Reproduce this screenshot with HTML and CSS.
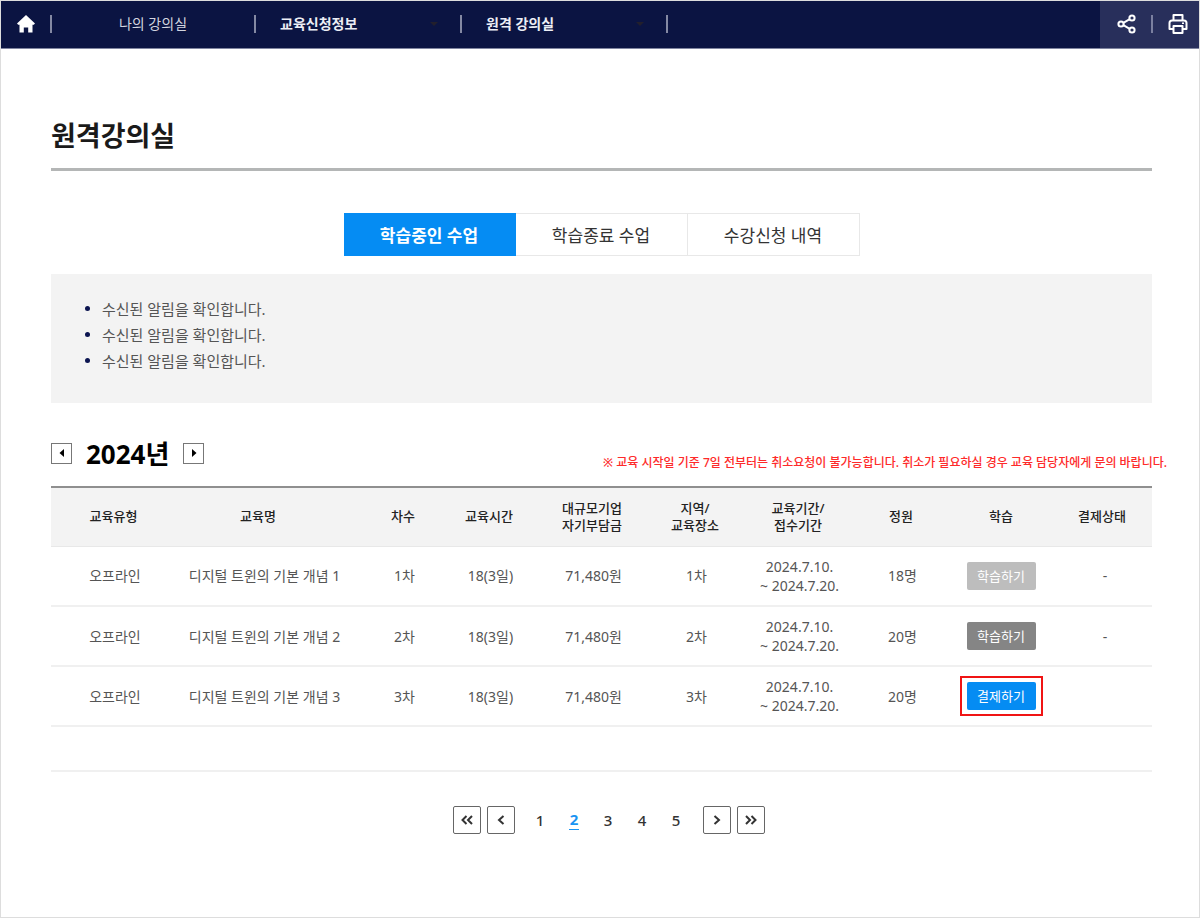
FILE: index.html
```html
<!DOCTYPE html>
<html lang="ko">
<head>
<meta charset="utf-8">
<meta name="viewport" content="width=device-width, initial-scale=1">
<title>원격강의실</title>
<link rel="stylesheet" href="styles.css">
</head>
<body>
<div class="page">
  <header class="topbar">
    <nav class="crumbs" aria-label="현재 위치">
      <a class="home" href="#" aria-label="홈">
        <svg width="20" height="20" viewBox="0 0 20 20"><path fill="#fff" d="M10 1 L1 9.6 L2.2 10.8 H3.5 V18.5 H7.8 V13.5 H12.2 V18.5 H16.5 V10.8 H17.8 L19 9.6 Z"/></svg>
      </a>
      <a class="crumb crumb-root" href="#">나의 강의실</a>
      <button class="crumb crumb-menu" type="button">교육신청정보<span class="caret"></span></button>
      <button class="crumb crumb-menu" type="button">원격 강의실<span class="caret"></span></button>
      <span class="crumb-end"></span>
    </nav>
    <div class="tools">
      <button class="tool" type="button" aria-label="공유">
        <svg width="20" height="22" viewBox="0 0 20 22" fill="none" stroke="#fff" stroke-width="2"><circle cx="4" cy="11" r="2.6"/><circle cx="15" cy="5" r="2.6"/><circle cx="15" cy="17" r="2.6"/><path d="M6.4 9.8 L12.7 6.2 M6.4 12.2 L12.7 15.8"/></svg>
      </button>
      <span class="tool-line"></span>
      <button class="tool" type="button" aria-label="인쇄">
        <svg width="22" height="22" viewBox="0 0 22 22" fill="none" stroke="#fff" stroke-width="2" stroke-linejoin="round"><path d="M6.500 7.500 V2 H15.500 V7.500"/><path d="M6 16 H2.500 V10 Q2.500 7.500 5 7.500 H17 Q19.500 7.500 19.500 10 V16 H16"/><path d="M6.500 13 H15.500 V20 H6.500 Z"/><path stroke-width="1.500" d="M15 10.300 H17"/></svg>
      </button>
    </div>
  </header>

  <main class="content">
    <h1 class="title">원격강의실</h1>

    <div class="tabs" role="tablist">
      <button class="tab tab-on" type="button" role="tab" aria-selected="true">학습중인 수업</button>
      <button class="tab" type="button" role="tab" aria-selected="false">학습종료 수업</button>
      <button class="tab" type="button" role="tab" aria-selected="false">수강신청 내역</button>
    </div>

    <ul class="notices">
      <li>수신된 알림을 확인합니다.</li>
      <li>수신된 알림을 확인합니다.</li>
      <li>수신된 알림을 확인합니다.</li>
    </ul>

    <div class="yearbar">
      <div class="year">
        <button class="year-btn" type="button" aria-label="이전 연도"><svg width="6" height="8" viewBox="0 0 6 8"><path d="M5 0 V8 L0.500 4 Z"/></svg></button>
        <h2 class="year-text">2024년</h2>
        <button class="year-btn" type="button" aria-label="다음 연도"><svg width="6" height="8" viewBox="0 0 6 8"><path d="M1 0 V8 L5.500 4 Z"/></svg></button>
      </div>
      <p class="warning">※ 교육 시작일 기준 7일 전부터는 취소요청이 불가능합니다. 취소가 필요하실 경우 교육 담당자에게 문의 바랍니다.</p>
    </div>

    <table class="courses">
      <colgroup>
        <col class="c-type"><col class="c-name"><col class="c-round"><col class="c-time"><col class="c-fee"><col class="c-place"><col class="c-date"><col class="c-seats"><col class="c-study"><col class="c-pay">
      </colgroup>
      <thead>
        <tr>
          <th class="type">교육유형</th><th>교육명</th><th>차수</th><th>교육시간</th><th>대규모기업<br>자기부담금</th><th>지역/<br>교육장소</th><th>교육기간/<br>접수기간</th><th>정원</th><th>학습</th><th>결제상태</th>
        </tr>
      </thead>
      <tbody>
        <tr>
          <td class="type">오프라인</td><td class="name">디지털 트윈의 기본 개념 1</td><td>1차</td><td>18(3일)</td><td>71,480원</td><td>1차</td><td>2024.7.10.<br>~ 2024.7.20.</td><td>18명</td><td class="study"><button class="btn btn-light" type="button">학습하기</button></td><td>-</td>
        </tr>
        <tr>
          <td class="type">오프라인</td><td class="name">디지털 트윈의 기본 개념 2</td><td>2차</td><td>18(3일)</td><td>71,480원</td><td>2차</td><td>2024.7.10.<br>~ 2024.7.20.</td><td>20명</td><td class="study"><button class="btn btn-dark" type="button">학습하기</button></td><td>-</td>
        </tr>
        <tr>
          <td class="type">오프라인</td><td class="name">디지털 트윈의 기본 개념 3</td><td>3차</td><td>18(3일)</td><td>71,480원</td><td>3차</td><td>2024.7.10.<br>~ 2024.7.20.</td><td>20명</td><td class="study"><span class="marked"><button class="btn btn-blue" type="button">결제하기</button></span></td><td></td>
        </tr>
        <tr class="blank"><td colspan="10"></td></tr>
      </tbody>
    </table>

    <nav class="pager" aria-label="페이지">
      <a class="page-btn" href="#" aria-label="처음"><svg width="14" height="12" viewBox="0 0 14 12"><path d="M6.500 2 L2.500 6 L6.500 10 M12 2 L8 6 L12 10"/></svg></a>
      <a class="page-btn" href="#" aria-label="이전"><svg width="14" height="12" viewBox="0 0 14 12"><path d="M9.500 2 L5 6 L9.500 10"/></svg></a>
      <div class="page-nums">
        <a class="num" href="#">1</a>
        <a class="num num-on" href="#" aria-current="page">2</a>
        <a class="num" href="#">3</a>
        <a class="num" href="#">4</a>
        <a class="num" href="#">5</a>
      </div>
      <a class="page-btn" href="#" aria-label="다음"><svg width="14" height="12" viewBox="0 0 14 12"><path d="M4.500 2 L9 6 L4.500 10"/></svg></a>
      <a class="page-btn" href="#" aria-label="마지막"><svg width="14" height="12" viewBox="0 0 14 12"><path d="M2 2 L6 6 L2 10 M7.500 2 L11.500 6 L7.500 10"/></svg></a>
    </nav>
  </main>
</div>
</body>
</html>
```
FILE: styles.css
```css
* { box-sizing: border-box; }
body {
  margin: 0;
  font-family: "Noto Sans", "Noto Sans CJK KR", sans-serif;
  font-size: 14px;
  color: #555;
  background: #fff;
}
button { font: inherit; color: inherit; cursor: pointer; border: 0; padding: 0; background: none; }
a { color: inherit; text-decoration: none; }
h1, h2, p, ul { margin: 0; padding: 0; }
svg { display: block; }

.page { min-height: 100vh; border: 1px solid #ddd; }

.topbar {
  display: flex;
  justify-content: space-between;
  height: 48px;
  background: #0b1442;
  border-bottom: 1px solid #8085a0;
  color: #fff;
}
.crumbs { display: flex; align-items: center; padding-bottom: 2px; }
.home { display: flex; justify-content: center; width: 49px; }
.crumb {
  display: flex;
  align-items: center;
  width: 206px;
  height: 18px;
  border-left: 2px solid #8489a3;
  font-size: 14px;
  line-height: 18px;
}
.crumb-root { justify-content: center; width: 204px; color: #d2d4df; }
.crumb-menu { justify-content: space-between; padding: 0 22px 0 24px; font-weight: 700; color: #eceef5; }
.caret { border: 4px solid transparent; border-top-color: #221f2c; border-bottom: 0; }
.crumb-end { width: 2px; height: 18px; background: #8489a3; }
.tools {
  display: flex;
  align-items: center;
  gap: 14px;
  padding: 0 10px 2px 17px;
  background: #282f5b;
}
.tool-line { width: 2px; height: 18px; background: #7b80a0; }

.content { padding: 64px 47px 40px 50px; }
.title {
  padding-bottom: 9px;
  border-bottom: 3px solid #b4b6b6;
  font-size: 27px;
  line-height: 46px;
  color: #1a1a1a;
}

.tabs { display: flex; justify-content: center; margin-top: 42px; }
.tab {
  width: 172px;
  height: 43px;
  border: 1px solid #e8e8e8;
  border-left: 0;
  font-size: 17px;
  color: #333;
}
.tab-on { background: #058cf3; border-color: #058cf3; color: #fff; font-weight: 700; }

.notices {
  display: flex;
  flex-direction: column;
  margin-top: 18px;
  padding: 22px 32px 29px;
  background: #f3f3f3;
  list-style: none;
  font-size: 15px;
  line-height: 26px;
}
.notices li { display: flex; align-items: center; gap: 12px; }
.notices li::before {
  content: "";
  width: 5px;
  height: 5px;
  margin: 0 0 2px 2px;
  border-radius: 50%;
  background: #0b1450;
}

.yearbar { display: flex; justify-content: space-between; margin-top: 32px; height: 51px; }
.year { display: flex; align-items: center; gap: 14px; height: 38px; }
.year-btn {
  display: flex;
  align-items: center;
  justify-content: center;
  width: 21px;
  height: 21px;
  margin-bottom: 2px;
  border: 1px solid #777;
}
.year-text { font-size: 26px; line-height: 38px; color: #000; }
.warning {
  margin: 18px -15px 0 0;
  font-size: 12px;
  line-height: 20px;
  font-weight: 500;
  color: #fe2a2a;
  white-space: nowrap;
}

.courses {
  width: 100%;
  table-layout: fixed;
  border-collapse: collapse;
  border-top: 2px solid #8f8f8f;
  text-align: center;
}
.c-type { width: 105px; }
.c-name { width: 204px; }
.c-round, .c-time, .c-place, .c-seats { width: 86px; }
.c-fee, .c-date { width: 120px; }
.c-study { width: 114px; }
.c-pay { width: 94px; }
.courses th {
  height: 59px;
  padding: 0;
  background: #f3f3f3;
  border-bottom: 1px solid #e8e8e8;
  font-size: 13px;
  line-height: 17px;
  font-weight: 500;
  color: #222;
}
.courses th:last-child { padding-right: 6px; }
.courses td {
  height: 60px;
  padding: 0 0 0 3px;
  border-bottom: 2px solid #f0f0f0;
  line-height: 19px;
}
.courses td.study, .courses td:last-child { padding-left: 0; }
.courses th.type { padding-left: 20px; }
.courses td.type { padding-left: 23px; }
.courses td.name { padding-left: 13px; }
.courses .blank td { height: 45px; }

.btn {
  width: 69px;
  height: 28px;
  border-radius: 2px;
  font-size: 13px;
  line-height: 20px;
  color: #fff;
  vertical-align: middle;
}
.btn-light { background: #bdbdbd; }
.btn-dark { background: #858585; }
.btn-blue { background: #058cf3; }
.marked { display: inline-block; padding: 4px 5px; border: 2px solid #f01414; vertical-align: middle; }

.pager { display: flex; align-items: center; justify-content: center; gap: 6px; margin: 34px 0 0 15px; }
.page-btn {
  display: flex;
  align-items: center;
  justify-content: center;
  width: 28px;
  height: 28px;
  border: 1px solid #666;
  border-radius: 2px;
}
.page-btn path { fill: none; stroke: #333; stroke-width: 2; }
.page-nums { display: flex; gap: 24px; padding: 0 16px 0 14px; }
.num { width: 10px; font-size: 15px; line-height: 20px; font-weight: 500; color: #333; text-align: center; }
.num-on { color: #1a94f2; font-weight: 700; border-bottom: 1px solid #1a94f2; line-height: 18px; }
```
